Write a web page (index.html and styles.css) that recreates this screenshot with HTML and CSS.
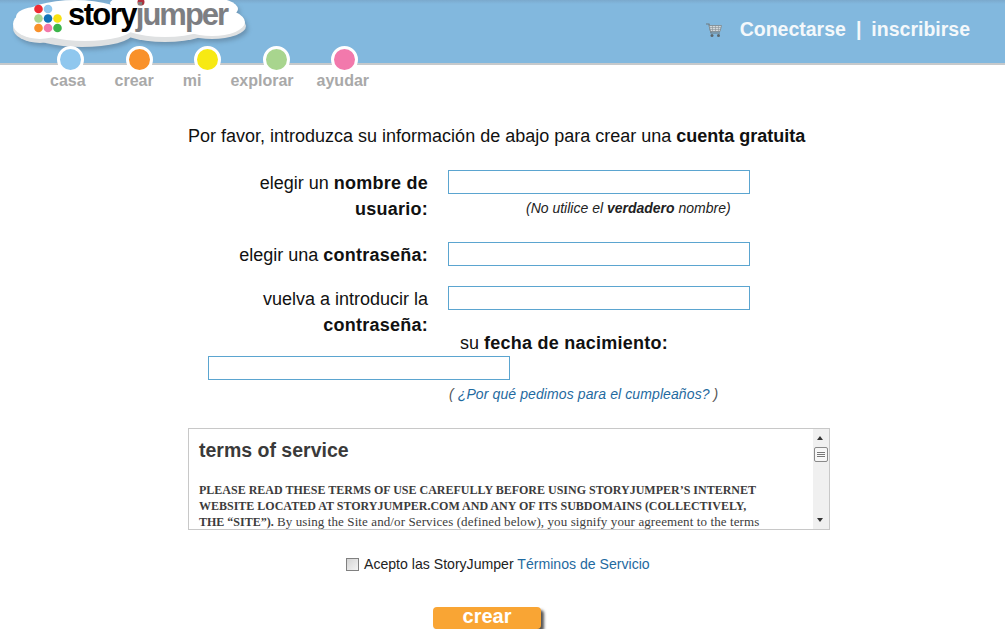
FILE: index.html
```html
<!DOCTYPE html>
<html lang="es">
<head>
    <meta charset="UTF-8">
    <meta name="viewport" content="width=device-width, initial-scale=1.0">
    <title>StoryJumper</title>
    <link rel="stylesheet" href="styles.css">
</head>
<body>
    <header class="topbar">
        <a class="logo" href="#">
            <svg class="cloud" width="252" height="54" viewBox="0 0 252 54">
                <g fill="#dfe1e2">
                    <ellipse cx="40" cy="28" rx="27" ry="15"/>
                    <ellipse cx="82" cy="34" rx="50" ry="13"/>
                    <ellipse cx="165" cy="26" rx="50" ry="16"/>
                    <ellipse cx="212" cy="26" rx="34" ry="13"/>
                </g>
                <g fill="#fff">
                    <ellipse cx="40" cy="24" rx="27" ry="15"/>
                    <ellipse cx="36" cy="17" rx="20" ry="10"/>
                    <ellipse cx="75" cy="15" rx="50" ry="15"/>
                    <ellipse cx="85" cy="28" rx="48" ry="13"/>
                    <ellipse cx="165" cy="20" rx="50" ry="17"/>
                    <ellipse cx="212" cy="22" rx="33" ry="14"/>
                    <ellipse cx="205" cy="9" rx="33" ry="12"/>
                    <ellipse cx="165" cy="3" rx="55" ry="10"/>
                </g>
                <circle cx="141" cy="2" r="3.5" fill="#b22f3f"/>
                <circle cx="38.500" cy="9" r="4.300" fill="#ee2a33"/>
                <circle cx="48" cy="9" r="4.300" fill="#8fc7ee"/>
                <circle cx="38.500" cy="18.500" r="4.300" fill="#a8d58e"/>
                <circle cx="48" cy="18.500" r="4.300" fill="#0f72b8"/>
                <circle cx="57.500" cy="18.500" r="4.300" fill="#f7e213"/>
                <circle cx="38.500" cy="28" r="4.300" fill="#f9912a"/>
                <circle cx="48" cy="28" r="4.300" fill="#f279ac"/>
                <circle cx="57.500" cy="28" r="4.300" fill="#3cb54a"/>
            </svg>
            <span class="logo-story">story</span><span class="logo-jumper">jumper</span>
        </a>
        <svg class="cart" width="16" height="15" viewBox="0 0 16 15">
            <path d="M0 1h3l2 9h9" fill="none" stroke="#6f7a80" stroke-width="1.200"/>
            <path d="M3 2.500h12.500l-1.500 6H4.500z" fill="#d3d9dc" stroke="#7c868c" stroke-width="0.800"/>
            <path d="M3.500 4.500h11.500M4 6.500h10.500M6.500 2.500v6M9.500 2.500v6M12.500 2.500v6" stroke="#8a9298" stroke-width="0.600"/>
            <circle cx="6" cy="12.500" r="1.500" fill="#5d666b"/>
            <circle cx="12.500" cy="12.500" r="1.500" fill="#5d666b"/>
        </svg>
        <nav class="account">
            <a href="#">Conectarse</a>
            <span class="sep">|</span>
            <a href="#">inscribirse</a>
        </nav>
    </header>

    <div class="nav">
        <div class="nav-dots">
            <span class="dot dot-casa"></span>
            <span class="dot dot-crear"></span>
            <span class="dot dot-mi"></span>
            <span class="dot dot-explorar"></span>
            <span class="dot dot-ayudar"></span>
        </div>
        <div class="nav-links">
            <a href="#">casa</a>
            <a href="#">crear</a>
            <a href="#">mi</a>
            <a href="#">explorar</a>
            <a class="nav-last" href="#">ayudar</a>
        </div>
    </div>

    <main class="content">
        <p class="intro">Por favor, introduzca su información de abajo para crear una <b>cuenta gratuita</b></p>

        <form class="signup">
            <div class="row row-user">
                <label class="row-label">elegir un <b>nombre de usuario:</b></label>
                <div class="row-field">
                    <input class="text-input" type="text">
                    <p class="hint">(No utilice el <b>verdadero</b> nombre)</p>
                </div>
            </div>
            <div class="row">
                <label class="row-label">elegir una <b>contraseña:</b></label>
                <div class="row-field">
                    <input class="text-input" type="password">
                </div>
            </div>
            <div class="row">
                <label class="row-label">vuelva a introducir la <b>contraseña:</b></label>
                <div class="row-field">
                    <input class="text-input" type="password">
                </div>
            </div>

            <div class="birth">
                <label class="birth-label">su <b>fecha de nacimiento:</b></label>
                <input class="text-input birth-input" type="text">
                <p class="why">( <a href="#">¿Por qué pedimos para el cumpleaños?</a> )</p>
            </div>

            <div class="terms">
                <div class="terms-body">
                    <h2>terms of service</h2>
                    <p><b>PLEASE READ THESE TERMS OF USE CAREFULLY BEFORE USING STORYJUMPER’S INTERNET WEBSITE LOCATED AT STORYJUMPER.COM AND ANY OF ITS SUBDOMAINS (COLLECTIVELY, THE “SITE”).</b> By using the Site and/or Services (defined below), you signify your agreement to the terms</p>
                </div>
                <div class="scrollbar">
                    <span class="arrow arrow-up"></span>
                    <span class="thumb"></span>
                    <span class="arrow arrow-down"></span>
                </div>
            </div>

            <div class="accept">
                <input class="check" type="checkbox">
                <span>Acepto las StoryJumper <a href="#">Términos de Servicio</a></span>
            </div>

            <button class="create" type="button">crear</button>
        </form>
    </main>
</body>
</html>
```

FILE: styles.css
```css
body {
    margin: 0;
    padding: 0;
    font-family: "Liberation Sans", Arial, sans-serif;
    background: #fff;
    color: #111;
}

a {
    text-decoration: none;
}

.topbar {
    position: relative;
    display: flex;
    align-items: center;
    justify-content: flex-end;
    box-sizing: border-box;
    height: 65px;
    padding: 0 35px 4px 0;
    background: linear-gradient(to bottom, #7ba9cc, #82b8de 4px);
    border-bottom: 2px solid #c6c9cb;
}

.logo {
    position: absolute;
    top: 0;
    left: 0;
    display: flex;
    width: 252px;
    height: 54px;
    padding-left: 68px;
    box-sizing: border-box;
    font-size: 31px;
    font-weight: bold;
    line-height: 30px;
}

.cloud {
    position: absolute;
    top: 0;
    left: 0;
    filter: drop-shadow(2px 3px 2px rgba(70, 90, 110, 0.4));
}

.logo-story,
.logo-jumper {
    position: relative;
    height: 30px;
}

.logo-story {
    color: #000;
    letter-spacing: -1.600px;
}

.logo-jumper {
    color: #7d7e82;
    letter-spacing: -2px;
}

.cart {
    margin: 2px 18px 0 0;
}

.account {
    display: flex;
    gap: 10px;
    font-size: 19.500px;
    font-weight: bold;
    color: #f4f8fb;
}

.account a {
    color: #f4f8fb;
}

.nav {
    position: relative;
    margin-top: -19px;
}

.nav-dots {
    display: flex;
    gap: 41.500px;
    padding-left: 57px;
}

.dot {
    width: 21px;
    height: 21px;
    border: 3.500px solid #fff;
    border-radius: 50%;
}

.dot-casa { background: #8fc7ee; }
.dot-crear { background: #f9912a; }
.dot-mi { background: #f7e913; }
.dot-explorar { background: #a8d58e; }
.dot-ayudar { background: #f279ac; }

.nav-links {
    display: flex;
    gap: 29px;
    margin-top: -1px;
    padding-left: 50px;
    font-size: 16px;
    font-weight: bold;
    line-height: 18px;
}

.nav-links a {
    color: #a9a9a9;
}

.nav-links .nav-last {
    margin-left: -6px;
}

.content {
    width: 642px;
    margin-left: 188px;
    font-size: 18px;
}

.intro {
    margin: 36px 0 24px;
    line-height: 20px;
    white-space: nowrap;
}

.row {
    display: flex;
    gap: 20px;
    margin-bottom: 18px;
}

.row-label {
    width: 240px;
    text-align: right;
    line-height: 26px;
}

.row-label b,
.birth-label b {
    letter-spacing: 0.250px;
}

.row-field {
    width: 302px;
}

.text-input {
    display: block;
    box-sizing: border-box;
    width: 302px;
    height: 24px;
    margin: 0;
    border: 1px solid #5ba5d0;
    background: #fff;
}

.hint {
    margin: 6px 0 8px;
    padding-left: 78px;
    font-size: 14px;
    font-style: italic;
    line-height: 16px;
    color: #222;
    white-space: nowrap;
}

.birth {
    margin-top: -26px;
}

.birth-label {
    display: block;
    padding-left: 272px;
    line-height: 26px;
}

.birth-input {
    margin-left: 20px;
}

.why {
    margin: 6px 0 0;
    padding-left: 261px;
    font-size: 14px;
    font-style: italic;
    letter-spacing: 0.100px;
    line-height: 16px;
    color: #555;
}

.why a,
.accept a {
    color: #1f6aa0;
}

.terms {
    display: flex;
    box-sizing: border-box;
    height: 102px;
    margin-top: 26px;
    border: 1px solid #c8c8c8;
    overflow: hidden;
}

.terms-body {
    flex: 1;
    padding: 0 50px 0 10px;
    color: #3c3c3c;
}

.terms-body h2 {
    margin: 9px 0 0;
    font-size: 19.500px;
    line-height: 24px;
    color: #3a3a3a;
}

.terms-body p {
    margin: 20px 0 0;
    font-family: "Liberation Serif", "Times New Roman", serif;
    font-size: 13px;
    letter-spacing: 0.100px;
    line-height: 16px;
}

.terms-body b {
    font-size: 12px;
    letter-spacing: 0;
}

.scrollbar {
    position: relative;
    width: 16px;
    background: #f0f0f0;
}

.arrow {
    position: absolute;
    left: 4px;
    width: 0;
    height: 0;
    border-left: 3.500px solid transparent;
    border-right: 3.500px solid transparent;
}

.arrow-up {
    top: 7px;
    border-bottom: 4px solid #333;
}

.arrow-down {
    bottom: 7px;
    border-top: 4px solid #333;
}

.thumb {
    position: absolute;
    top: 18px;
    left: 1px;
    box-sizing: border-box;
    width: 14px;
    height: 15px;
    border: 1px solid #8a8a8a;
    border-radius: 2px;
    background: repeating-linear-gradient(to bottom, #fafafa 0, #fafafa 1px, #777 1px, #777 2px) center / 8px 7px no-repeat, #f6f6f6;
}

.accept {
    display: flex;
    align-items: center;
    gap: 5px;
    margin: 24px 0 0 158px;
    font-size: 14.100px;
    line-height: 20px;
    color: #222;
}

.check {
    box-sizing: border-box;
    width: 13px;
    height: 13px;
    margin: 0;
    appearance: none;
    border: 1px solid #808080;
    background: linear-gradient(135deg, #d4d4d4, #f4f4f4);
}

.create {
    display: block;
    width: 108px;
    height: 22px;
    margin: 33px 0 0 245px;
    padding: 0 0 3px;
    border: none;
    border-radius: 4px;
    background: #f9a534;
    box-shadow: 3px 3px 3px #555;
    color: #fff;
    font-family: inherit;
    font-size: 20px;
    font-weight: bold;
    line-height: 19px;
}
```
